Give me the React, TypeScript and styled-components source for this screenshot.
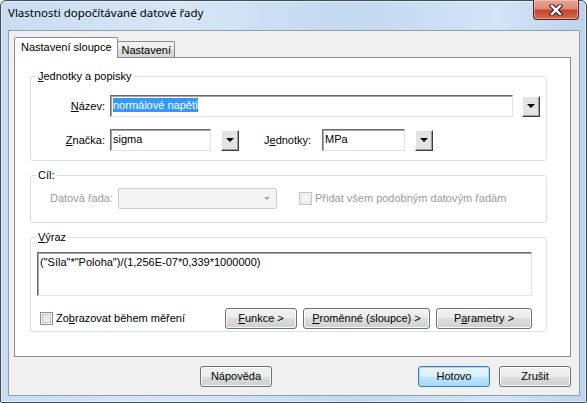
import React from 'react'
import styled, { createGlobalStyle, css } from 'styled-components'

const GlobalStyle = createGlobalStyle`
	html, body {
		margin: 0;
		padding: 0;
		width: 587px;
		height: 403px;
		overflow: hidden;
		background: #ffffff;
	}
	* {
		box-sizing: border-box;
	}
`

const dialogFont = css`
	font-family: 'Liberation Sans', Arial, sans-serif;
	font-size: 11px;
	font-weight: 400;
	line-height: 13px;
	color: #000000;
`

const Window = styled.div`
	width: 587px;
	height: 403px;
	display: flex;
	flex-direction: column;
	border: 1px solid #3e4b5c;
	border-radius: 6px 6px 2px 2px;
	padding: 0 6px 6px 7px;
	background: linear-gradient(to right, #c9dcf1 0%, #d6e6f6 30%, #c3d9ef 60%, #d2e4f6 85%, #bcd3ec 100%);
	box-shadow: inset 0 0 0 1px rgba(255, 255, 255, 0.55);
`

const TitleBar = styled.div`
	height: 29px;
	display: flex;
	align-items: flex-start;
	flex-shrink: 0;
`

const Title = styled.div`
	flex: 1;
	margin-top: 4px;
	font-family: 'Noto Sans', 'Open Sans', sans-serif;
	font-size: 11.5px;
	line-height: 16px;
	color: #000000;
	white-space: nowrap;
`

const CloseButton = styled.div`
	width: 46px;
	height: 20px;
	margin-top: -1px;
	margin-right: 1px;
	display: flex;
	align-items: center;
	justify-content: center;
	border: 1px solid #5a2519;
	border-top: none;
	border-radius: 0 0 4px 4px;
	background: linear-gradient(#e9a594 0%, #dc8b77 45%, #c7442f 55%, #d26a52 100%);
	box-shadow: inset 0 0 0 1px rgba(255, 220, 210, 0.45);
`

const Client = styled.div`
	flex: 1;
	display: flex;
	flex-direction: column;
	border: 1px solid #8e9db0;
	background: #f0f0f0;
	padding: 6px 8px 0 5px;
	${dialogFont};
`

const TabStrip = styled.div`
	display: flex;
	align-items: flex-end;
	height: 20px;
`

const Tab = styled.div<{ $active?: boolean }>`
	${dialogFont};
	display: flex;
	align-items: center;
	border: 1px solid #898c95;
	border-bottom: none;
	border-radius: 2px 2px 0 0;
	white-space: nowrap;
	${({ $active }) =>
		$active
			? css`
					height: 21px;
					padding: 0 5px 1px 6px;
					background: #ffffff;
					margin-bottom: -1px;
					position: relative;
					z-index: 1;
			  `
			: css`
					height: 16px;
					padding: 1px 3px 0 4px;
					margin-left: -1px;
					background: linear-gradient(#f3f3f3 0%, #ebebeb 50%, #dedede 50%, #d6d6d6 100%);
			  `}
`

const Page = styled.div`
	width: 557px;
	height: 300px;
	border: 1px solid #898c95;
	background: #ffffff;
	padding: 12px 23px 0 15px;
	display: flex;
	flex-direction: column;
`

const Group = styled.fieldset<{ $top?: number }>`
	margin: ${({ $top }) => $top ?? 0}px 0 0 0;
	padding: 0;
	border: 1px solid #d5dfe5;
	border-radius: 3px;
	min-width: 0;
`

const Legend = styled.legend`
	${dialogFont};
	margin-left: 5px;
	padding: 0 2px;
`

const Row = styled.div<{ $top?: number; $left?: number; $right?: number; $bottom?: number }>`
	display: flex;
	align-items: center;
	margin-top: ${({ $top }) => $top ?? 0}px;
	padding-left: ${({ $left }) => $left ?? 0}px;
	padding-right: ${({ $right }) => $right ?? 0}px;
	margin-bottom: ${({ $bottom }) => $bottom ?? 0}px;
`

const Label = styled.span<{ $width?: number; $disabled?: boolean; $left?: number; $align?: string }>`
	${dialogFont};
	width: ${({ $width }) => ($width ? `${$width}px` : 'auto')};
	text-align: ${({ $align }) => $align ?? 'right'};
	margin-left: ${({ $left }) => $left ?? 0}px;
	margin-right: 5px;
	white-space: nowrap;
	flex-shrink: 0;
	color: ${({ $disabled }) => ($disabled ? '#9a9a9a' : '#000000')};
`

const sunken = css`
	border: 1px solid;
	border-color: #6d6d6d #e3e3e3 #e3e3e3 #6d6d6d;
	box-shadow: inset 1px 1px 0 #a5a5a5;
	background: #ffffff;
`

const TextBox = styled.div<{ $width: number }>`
	${sunken};
	${dialogFont};
	width: ${({ $width }) => $width}px;
	height: 22px;
	padding: 3px 0 0 2px;
	white-space: nowrap;
	overflow: hidden;
	flex-shrink: 0;
`

const Selected = styled.span`
	background: #3399ff;
	color: #ffffff;
	padding: 1px 0;
`

const DropButton = styled.div<{ $left: number }>`
	width: 18px;
	height: 21px;
	margin-left: ${({ $left }) => $left}px;
	display: flex;
	align-items: center;
	justify-content: center;
	background: #e3e3e3;
	border: 1px solid;
	border-color: #ffffff #3c3c3c #3c3c3c #ffffff;
	box-shadow: inset -1px -1px 0 #a0a0a0;
	flex-shrink: 0;
`

const Arrow = styled.span<{ $color?: string; $size?: number }>`
	width: 0;
	height: 0;
	border-left: ${({ $size }) => $size ?? 4}px solid transparent;
	border-right: ${({ $size }) => $size ?? 4}px solid transparent;
	border-top: ${({ $size }) => $size ?? 4}px solid ${({ $color }) => $color ?? '#000000'};
`

const Combo = styled.div`
	width: 159px;
	height: 21px;
	border: 1px solid #cdcdcd;
	border-radius: 2px;
	background: #f4f4f4;
	display: flex;
	align-items: center;
	justify-content: flex-end;
	padding-right: 6px;
	flex-shrink: 0;
`

const Check = styled.span<{ $disabled?: boolean; $left?: number }>`
	width: 13px;
	height: 13px;
	flex-shrink: 0;
	margin-left: ${({ $left }) => $left ?? 0}px;
	border: 1px solid ${({ $disabled }) => ($disabled ? '#c2c2c2' : '#8f8f8f')};
	background: ${({ $disabled }) =>
		$disabled ? '#f4f4f4' : 'linear-gradient(135deg, #dcdcdc 0%, #f4f4f4 100%)'};
	box-shadow: inset 0 0 0 1px #f4f4f4,
		inset 0 0 0 2px ${({ $disabled }) => ($disabled ? '#e6e6e6' : '#c9c9c9')};
`

const CheckLabel = styled.span<{ $disabled?: boolean }>`
	${dialogFont};
	margin-left: 3px;
	white-space: nowrap;
	color: ${({ $disabled }) => ($disabled ? '#9a9a9a' : '#000000')};
`

const TextArea = styled.div`
	${sunken};
	${dialogFont};
	width: 495px;
	height: 44px;
	padding: 3px 0 0 2px;
	white-space: nowrap;
`

const Buttons = styled.div<{ $gap: number }>`
	display: flex;
	margin-left: auto;
	gap: ${({ $gap }) => $gap}px;
`

const PushButton = styled.div<{ $width: number; $height?: number; $default?: boolean }>`
	${dialogFont};
	width: ${({ $width }) => $width}px;
	height: ${({ $height }) => $height ?? 21}px;
	display: flex;
	align-items: center;
	justify-content: center;
	border-radius: 3px;
	white-space: nowrap;
	${({ $default }) =>
		$default
			? css`
					border: 1px solid #3c7fb1;
					background: linear-gradient(#eaf6fd 0%, #d9f0fc 50%, #bee6fd 50%, #a7d9f5 100%);
					box-shadow: inset 0 0 0 1px #9fdcf8;
			  `
			: css`
					border: 1px solid #707070;
					background: linear-gradient(#f2f2f2 0%, #ebebeb 50%, #dddddd 50%, #cfcfcf 100%);
					box-shadow: inset 0 0 0 1px #fbfbfb;
			  `}
`

const Footer = styled.div`
	display: flex;
	justify-content: flex-end;
	margin-top: 9px;
	gap: 9px;
`

const HelpButton = styled(PushButton)`
	margin-right: 137px;
`

const CloseGlyph = () => (
	<svg width='14' height='12' viewBox='0 0 14 12'>
		<path d='M3 2 L11 10 M11 2 L3 10' stroke='#3b2a28' strokeWidth='4.6' strokeLinecap='square' />
		<path d='M3 2 L11 10 M11 2 L3 10' stroke='#ffffff' strokeWidth='2.4' strokeLinecap='square' />
	</svg>
)

export default function App() {
	return (
		<>
			<GlobalStyle />
			<Window>
				<TitleBar>
					<Title>Vlastnosti dopočítávané datové řady</Title>
					<CloseButton>
						<CloseGlyph />
					</CloseButton>
				</TitleBar>
				<Client>
					<TabStrip>
						<Tab $active>Nastavení sloupce</Tab>
						<Tab>Nastavení</Tab>
					</TabStrip>
					<Page>
						<Group>
							<Legend>
								<u>J</u>ednotky a popisky
							</Legend>
							<Row $top={12}>
								<Label $width={74}>
									<u>N</u>ázev:
								</Label>
								<TextBox $width={403}>
									<Selected>normálové napětí</Selected>
								</TextBox>
								<DropButton $left={9}>
									<Arrow />
								</DropButton>
							</Row>
							<Row $top={12} $bottom={9}>
								<Label $width={74}>
									<u>Z</u>načka:
								</Label>
								<TextBox $width={101}>sigma</TextBox>
								<DropButton $left={10}>
									<Arrow />
								</DropButton>
								<Label $left={25} $width={53} $align='left'>
									J<u>e</u>dnotky:
								</Label>
								<TextBox $width={83}>MPa</TextBox>
								<DropButton $left={10}>
									<Arrow />
								</DropButton>
							</Row>
						</Group>

						<Group $top={8}>
							<Legend>Cíl:</Legend>
							<Row $top={6} $left={19} $bottom={13}>
								<Label $disabled $width={63} $align='left'>
									Datová řada:
								</Label>
								<Combo>
									<Arrow $color='#a8a8a8' $size={3} />
								</Combo>
								<Check $disabled $left={22} />
								<CheckLabel $disabled>Přidat všem podobným datovým řadám</CheckLabel>
							</Row>
						</Group>

						<Group $top={8}>
							<Legend>
								<u>V</u>ýraz
							</Legend>
							<Row $top={8} $left={6}>
								<TextArea>("Síla"*"Poloha")/(1,256E-07*0,339*1000000)</TextArea>
							</Row>
							<Row $top={12} $left={6} $right={14} $bottom={2}>
								<Check $left={3} />
								<CheckLabel>
									Zo<u>b</u>razovat během měření
								</CheckLabel>
								<Buttons $gap={6}>
									<PushButton $width={72}>
										<u>F</u>unkce &gt;
									</PushButton>
									<PushButton $width={127}>
										<u>P</u>roměnné (sloupce) &gt;
									</PushButton>
									<PushButton $width={96}>
										P<u>a</u>rametry &gt;
									</PushButton>
								</Buttons>
							</Row>
						</Group>
					</Page>
					<Footer>
						<HelpButton $width={72} $height={21}>
							Nápověda
						</HelpButton>
						<PushButton $width={72} $height={21} $default>
							Hotovo
						</PushButton>
						<PushButton $width={72} $height={21}>
							Zrušit
						</PushButton>
					</Footer>
				</Client>
			</Window>
		</>
	)
}
